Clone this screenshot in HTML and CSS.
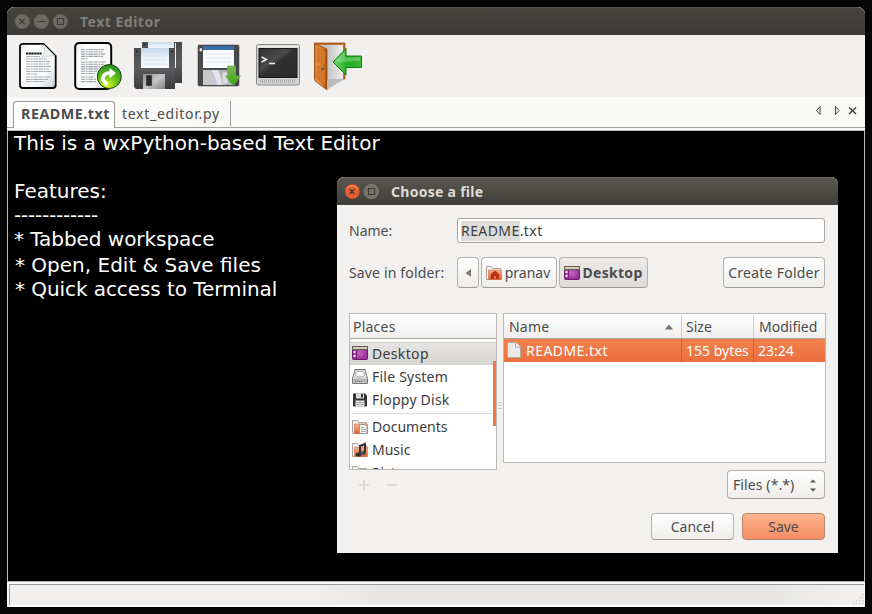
FILE: index.html
```html
<!DOCTYPE html>
<html lang="en">
<head>
<meta charset="utf-8">
<title>Text Editor</title>
<link rel="stylesheet" href="styles.css">
</head>
<body>
<svg width="0" height="0" class="defs" aria-hidden="true">
  <defs>
    <linearGradient id="paper" x1="0" y1="0" x2="1" y2="1"><stop offset="0" stop-color="#e2e7ea"/><stop offset=".2" stop-color="#fff"/><stop offset=".7" stop-color="#f7f8f9"/><stop offset="1" stop-color="#c5ccd0"/></linearGradient>
    <linearGradient id="steel" x1="0" y1="0" x2="0" y2="1"><stop offset="0" stop-color="#4a4a4c"/><stop offset=".5" stop-color="#5c5b5d"/><stop offset="1" stop-color="#3c3c3e"/></linearGradient>
    <linearGradient id="label" x1="0" y1="0" x2="0" y2="1"><stop offset="0" stop-color="#c5d8e9"/><stop offset=".5" stop-color="#e9f2fa"/><stop offset="1" stop-color="#fafcff"/></linearGradient>
    <linearGradient id="shutter" x1="0" y1="0" x2="1" y2="1"><stop offset="0" stop-color="#8f8f8f"/><stop offset=".5" stop-color="#c7c7c9"/><stop offset="1" stop-color="#808080"/></linearGradient>
    <radialGradient id="ball" cx=".4" cy=".9" r=".85"><stop offset="0" stop-color="#e9f52c"/><stop offset=".5" stop-color="#6dc51a"/><stop offset="1" stop-color="#299321"/></radialGradient>
    <linearGradient id="green" x1="0" y1="0" x2="0" y2="1"><stop offset="0" stop-color="#7fb35c"/><stop offset="1" stop-color="#35ab08"/></linearGradient>
    <linearGradient id="arrow" x1="0" y1="0" x2="1" y2="0"><stop offset="0" stop-color="#6fd866"/><stop offset=".5" stop-color="#22ad22"/><stop offset="1" stop-color="#38b833"/></linearGradient>
    <linearGradient id="screen" x1="0" y1="0" x2="1" y2="1"><stop offset="0" stop-color="#303030"/><stop offset=".4" stop-color="#4a4a4a"/><stop offset=".5" stop-color="#303030"/><stop offset="1" stop-color="#2c2c2c"/></linearGradient>
    <linearGradient id="wood" x1="0" y1="0" x2="1" y2="0"><stop offset="0" stop-color="#e7954b"/><stop offset=".7" stop-color="#d47526"/><stop offset="1" stop-color="#984409"/></linearGradient>
    <linearGradient id="room" x1="0" y1="0" x2="1" y2="0"><stop offset="0" stop-color="#aaa"/><stop offset="1" stop-color="#eee"/></linearGradient>
    <radialGradient id="purple"><stop offset="0" stop-color="#cb63bf"/><stop offset="1" stop-color="#96309a"/></radialGradient>
    <linearGradient id="orange" x1="0" y1="0" x2="0" y2="1"><stop offset="0" stop-color="#f8b894"/><stop offset="1" stop-color="#df5f2e"/></linearGradient>
    <symbol id="i-desktop" viewBox="0 0 16 16"><rect x=".5" y="1.500" width="15" height="13" rx="1" fill="url(#purple)" stroke="#72156b"/><path d="M0 1h16v4H0z" fill="#666252"/><path d="M1 2h14v2H1z" fill="#d0ceb6"/><path d="M1.500 6h2v2h-2zm0 4h2v2h-2z" fill="#eee"/><path d="M4.500 5v9" stroke="#7c2278"/></symbol>
    <symbol id="i-folder" viewBox="0 0 16 16"><path d="M.5 14.500v-13h5l1 2h8v11z" fill="#f6f5f3" stroke="#a7a5a1"/><path d="M2.500 5v9.500h13V5z" fill="url(#orange)" stroke="#d9633a" stroke-width=".6"/></symbol>
  </defs>
</svg>

<main class="window">
  <header class="titlebar">
    <svg class="winbtns" width="54" height="16" viewBox="0 0 54 16"><g fill="#6b6963" stroke="#64625c"><circle cx="8.300" cy="7.500" r="7.200"/><circle cx="27.300" cy="7.500" r="7.200"/><circle cx="46.300" cy="7.500" r="7.200"/></g><path d="M5.500 5l5 5m0-5l-5 5M23.500 7.500h8M43.500 4.500h6v6h-6z" fill="none" stroke="#3d3c37" stroke-width="1.100"/></svg>
    <h1>Text Editor</h1>
  </header>

  <nav class="toolbar">
    <svg viewBox="0 0 48 48"><path d="M9 1.800H29.500L41.700 14V43q0 3-3 3H9q-3 0-3-3V5q0-3.200 3-3.200z" fill="url(#paper)" stroke="#050505" stroke-width="1.800"/><path d="M29.500 2.500L41 14c-4-1-7 0-13 1.500 3-5 3-9 1.500-13z" fill="#e9eef1" stroke="#bcc4c8" stroke-width=".6"/><path d="M12 11.500h16" stroke="#222" stroke-width="2" stroke-dasharray="2.500 .4 2 .3"/><path d="M12 14.500h14M12 17h21M12 19.500h24M12 22h23M12 24.500h25M12 27h23M12 29.500h25M12 32h11M12 35h24M12 37.500h22M12 39.500h19" stroke="#a3a7aa" stroke-width="1.200" stroke-dasharray="4 .7 2 .6 5 .5"/></svg>
    <svg viewBox="0 0 48 48"><rect x="1.200" y="1" width="36" height="46" rx="4" fill="url(#paper)" stroke="#050505" stroke-width="2"/><path d="M7 7.500h23M7 9.800h22M7 12.100h24M7 14.400h22M7 16.700h7M7 20h24M7 22.300h23M7 24.600h20M7 26.900h17M7 29.200h16M7 31.500h14M7 35h13M7 37.300h15M7 39.600h15" stroke="#9ca1a4" stroke-width="1.100" stroke-dasharray="4 .7 2 .6 5 .5"/><circle cx="35.300" cy="34.500" r="12" fill="url(#ball)" stroke="#16480d"/><path d="M33.500 42C26.500 39 27.500 31 36.500 31" fill="none" stroke="#fff" stroke-width="3.600"/><path d="M35.500 26l6.500 5-6.500 5.500z" fill="#fff"/></svg>
    <svg viewBox="0 0 48 48"><path d="M8 0h40v41H8z" fill="url(#steel)"/><path d="M14 0h26v8H14z" fill="url(#label)"/><path d="M35 6h7v19h-2z" fill="#d5e1ec"/><path d="M9 1h3v3H9z" fill="#242424" stroke="#777" stroke-width=".5"/><path d="M41 1h1v25h-1z" fill="#eef3f8"/><path d="M0 6h41v41H2l-2-2z" fill="url(#steel)"/><path d="M7 6h28v20H7z" fill="url(#label)"/><path d="M9 10h24M9 14h24M9 18h24M9 22h24" stroke="#d5dfe9"/><path d="M1.500 8h2.500v3H1.500zM37 8h2.500v3H37z" fill="#222" stroke="#777" stroke-width=".5"/><path d="M9 32h22v15H9z" fill="url(#shutter)"/><path d="M12 33h6v11h-6z" fill="#292929" stroke="#999" stroke-width=".5"/></svg>
    <svg viewBox="0 0 48 48"><path d="M4 4q0-1 1-1h39q1 0 1 1v39l-1 1H5l-1-1z" fill="#48494c" stroke="#393939" stroke-width=".5"/><path d="M9 4h31v22H9z" fill="#f9fafc"/><path d="M9 4h31v4H9z" fill="#386ea9"/><path d="M12 12h25M12 16h25M12 20h25" stroke="#dde4ea"/><rect x="5.500" y="6" width="2.500" height="3.500" rx="1" fill="#ddd"/><path d="M9 28h31v15H9z" fill="#b5b6ba"/><path d="M9 28h8v15H9z" fill="#c9c9c9"/><path d="M17 28h7l8 15H17z" fill="#c6c7d4"/><path d="M18 28h6l5 15h-5z" fill="#e4e4ec"/><path d="M28 30h6v12h-6z" fill="#dcdcdd" stroke="#999" stroke-width=".5"/><path d="M33.500 24h8v10h5L39 43.500l-7.500-9.500h2z" fill="url(#green)" stroke="#72a953" stroke-width=".7"/></svg>
    <svg viewBox="0 0 48 48"><rect x="2.500" y="2.500" width="43" height="40.500" rx="2" fill="#d2d2d0" stroke="#8b8b89"/><path d="M3.500 3.500h41v2h-41z" fill="#eeeeed"/><rect x="5" y="6.500" width="38" height="29" fill="url(#screen)" stroke="#171717"/><path d="M7.500 15l5 2.500-5 2.500M15 21.500h6" fill="none" stroke="#eee" stroke-width="1.500"/><path d="M6 39h36" stroke="#aaa" stroke-width="3.500" stroke-dasharray="1 1"/></svg>
    <svg viewBox="0 0 48 48"><path d="M0 1h31v36H0z" fill="#c67029" stroke="#87400c" stroke-width=".7"/><path d="M3 3h26v34H3z" fill="url(#room)"/><path d="M14 37h15v1L14 47z" fill="#bbb"/><path d="M1 2l12 5v41L1 39z" fill="url(#wood)" stroke="#9f4f12" stroke-width=".8"/><path d="M3.500 6l2.500 1v14l-2.500-1zM8 8l3 1v14l-3-1zM3.500 24l2.500 1v13l-2.500-1zM8 26l3 1v16l-3-2z" fill="#d77b2d" stroke="#b9621c" stroke-width=".5"/><circle cx="8.500" cy="27" r="1.300" fill="#555"/><path d="M19 20L32 6.500v7.500h15.500v11.500H32V33z" fill="url(#arrow)" stroke="#0d800d"/><path d="M21 20L31 9v6.500h15V19c-9-1-15 2-25 1z" fill="#fff" opacity=".25"/></svg>
  </nav>

  <nav class="tabs">
    <span class="tab active">README.txt</span>
    <span class="tab">text_editor.py</span>
    <svg class="tabnav" width="44" height="14" viewBox="0 0 44 14"><path d="M7 2.500v8L3.500 6.500zM22.500 2.500v8L26 6.500z" fill="none" stroke="#44433f"/><path d="M36 3.500l7 6.500m0-6.500l-7 6.500" stroke="#44433f" stroke-width="1.500"/></svg>
  </nav>

  <section class="editor">
    <p>This is a wxPython-based Text Editor</p>
    <p>&nbsp;</p>
    <p>Features:</p>
    <p class="dashes">------------</p>
    <p class="bullet first">* Tabbed workspace</p>
    <p class="bullet">* Open, Edit &amp; Save files</p>
    <p class="bullet last">* Quick access to Terminal</p>
  </section>
  <footer class="statusbar"><div class="well"><svg width="12" height="12" viewBox="0 0 12 12"><path d="M10 1.500h2M7 4.500h5M4 7.500h8M1 10.500h11" stroke="#d2d0cc" stroke-width="1.300" stroke-dasharray="1.500 1.500"/></svg></div></footer>
</main>

<section class="dialog">
  <header class="titlebar">
    <svg class="winbtns" width="35" height="16" viewBox="0 0 35 16"><circle cx="8.300" cy="7.500" r="7.300" fill="#e95f35" stroke="#b9431e" stroke-width=".6"/><path d="M2.500 5a6.500 6.500 0 0 1 11.500 0" fill="none" stroke="#f69978"/><circle cx="27.300" cy="7.500" r="7.300" fill="#75736c" stroke="#8a8880" stroke-width=".6"/><path d="M5.500 5l5 5m0-5l-5 5M24.500 4.500h6v6h-6z" fill="none" stroke="#393731" stroke-width="1.100"/></svg>
    <h2>Choose a file</h2>
  </header>
  <div class="content">
    <div class="row name-row"><span class="caption">Name:</span><div class="input"><span class="selected">README</span>.txt</div></div>
    <div class="row path-row"><span class="caption folder">Save in folder:</span>
      <span class="button back"><svg width="8" height="10"><path d="M7 1v8L1.500 5z" fill="#7a7874"/></svg></span>
      <span class="button home"><svg class="ico" viewBox="0 0 16 16"><use href="#i-folder"/><path d="M4 10l5-4.500 5 4.500h-1v4h-3v-3H8v3H5v-4z" fill="#bb3412"/></svg><span>pranav</span></span>
      <span class="button current"><svg class="ico"><use href="#i-desktop"/></svg><b>Desktop</b></span>
      <span class="button create">Create Folder</span>
    </div>
    <div class="panes">
      <div class="left">
        <div class="places">
          <div class="head">Places</div>
          <div class="place on"><svg class="ico"><use href="#i-desktop"/></svg><span class="t-desk">Desktop</span></div>
          <div class="place"><svg class="ico" viewBox="0 0 16 16"><path d="M3 .5h10l2.500 9v5H.5v-5z" fill="#ddd" stroke="#777"/><ellipse cx="8" cy="5" rx="4.500" ry="3" fill="#f4f4f4" stroke="#aaa"/><path d="M1 9.500h14v4H1z" fill="#b5b5b5"/><path d="M3 12.500h7" stroke="#666" stroke-dasharray="1 1"/></svg><span class="t-fs">File System</span></div>
          <div class="place"><svg class="ico" viewBox="0 0 16 16"><path d="M1 1.500h12l2 2v11H1z" fill="#333"/><path d="M4 1.500h8v5H4z" fill="#ddd"/><path d="M9 2h2v3.500H9z" fill="#333"/><path d="M3.500 8.500h9v6h-9z" fill="#eee"/><path d="M4 10.500h8m-8 2h8" stroke="#999"/></svg><span class="t-floppy">Floppy Disk</span></div>
          <div class="rule"></div>
          <div class="place"><svg class="ico" viewBox="0 0 16 16"><use href="#i-folder"/><path d="M7.500 5.500h5l2.500 2v7H7.500z" fill="#f3f3f1" stroke="#999"/><path d="M9 8.500h3m-3 2h5m-5 2h5" stroke="#aaa"/></svg><span>Documents</span></div>
          <div class="place"><svg class="ico" viewBox="0 0 16 16"><use href="#i-folder"/><path d="M8 12V4l5-2v8" fill="none" stroke="#333" stroke-width="2"/><ellipse cx="6.500" cy="12.500" rx="2.800" ry="2" fill="#333"/><ellipse cx="11.500" cy="11" rx="2.500" ry="2" fill="#444"/></svg><span>Music</span></div>
          <div class="place"><svg class="ico"><use href="#i-folder"/></svg><span>Pictures</span></div>
          <i class="scroll"></i>
        </div>
        <svg class="addremove" width="60" height="14" viewBox="0 0 60 14"><path d="M10 7h10M15 2v10M38 7h10" stroke="#dddbd8" stroke-width="2"/></svg>
      </div>
      <div class="grip"><i></i><i></i><i></i></div>
      <div class="files">
        <div class="cols header"><span>Name<svg width="8" height="6"><path d="M0 5.500L4 .5l4 5z" fill="#73716d"/></svg></span><span>Size</span><span>Modified</span></div>
        <div class="cols item"><span><svg class="file" viewBox="0 0 14 16"><path d="M.5.500h8.500l4.500 4.500v10.500H.5z" fill="#e9e9e7" stroke="#aaa9a5"/><path d="M8.500.500V5h5" fill="#fff" stroke="#aaa9a5"/></svg><span class="t-file">README.txt</span></span><span>155 bytes</span><span>23:24</span></div>
      </div>
    </div>
    <div class="filter"><span class="button combo"><span>Files (*.*)</span><svg width="8" height="14"><path d="M1 4.500L4 1.500l3 3zM1 10.500L4 13.500l3-3z" fill="#595753"/></svg></span></div>
    <div class="actions"><span class="button">Cancel</span><span class="button save">Save</span></div>
  </div>
</section>
</body>
</html>
```
FILE: styles.css
```css
* { box-sizing: border-box; }
body { margin: 0; width: 872px; height: 614px; padding: 7px; background: #050505; overflow: hidden; position: relative; color: #4c4c4c; font: 14px/20px "Noto Sans", sans-serif; white-space: nowrap; }
svg { flex: none; display: block; }
.defs { position: absolute; }
h1, h2, p { margin: 0; }
.window { width: 858px; height: 600px; display: flex; flex-direction: column; background: #f2f1f0; border-radius: 7px 7px 0 0; overflow: hidden; }
.titlebar { height: 28px; flex: none; display: flex; align-items: center; padding-left: 7px; background: linear-gradient(#45443f, #3c3b37); border-top: 1px solid #55534d; border-radius: 7px 7px 0 0; }
.titlebar h1, .titlebar h2 { font-size: 14px; line-height: 20px; font-weight: 700; }
.window h1 { color: #807d78; margin-left: 12px; letter-spacing: .5px; }
.toolbar { height: 62px; flex: none; display: flex; gap: 12px; padding: 7px; background: #f1f0ee; }
.toolbar svg { width: 48px; height: 48px; }
.tabs { height: 33px; flex: none; display: flex; align-items: flex-start; background: #f9f9f7; padding: 4px 6px 0; box-shadow: inset 0 -2px #fcfcfb, inset 0 -3px #a5a59d; }
.tab { height: 25px; padding: 3px 10px 0 7px; border-right: 1px solid #999; letter-spacing: .72px; }
.tab.active { height: 27px; background: #fff; border: 1px solid #999; border-bottom: 0; border-radius: 3px 3px 0 0; font-weight: 700; font-size: 14.300px; letter-spacing: .5px; width: 102px; padding: 2px 0 0 7px; }
.tabnav { margin: 3px 2px 0 auto; }
.editor { flex: none; height: 452px; background: #000; border: 1px solid #bcbcb7; border-bottom: 1px solid #aaa9a4; color: #fff; font: 20px/24px "DejaVu Sans", sans-serif; padding-left: 6px; }
.dashes { letter-spacing: -.22px; }
.bullet { padding-left: 1px; }
.bullet.first { height: 26px; padding-left: 0; letter-spacing: -.05px; }
.bullet.last { letter-spacing: -.07px; }
.statusbar { flex: 1; padding: 2px 1px 1px 2px; background: #fafafa; }
.well { height: 22px; border-top: 1px solid #999; border-left: 1px solid #999; border-bottom: 1px solid #fff; background: linear-gradient(90deg, transparent 300px, rgba(0,0,0,.04) 370px 760px, transparent 840px), #f1f0ee; display: flex; justify-content: flex-end; align-items: flex-end; }
.dialog { position: absolute; left: 337px; top: 177px; width: 501px; height: 376px; background: #f2f1f0; border-radius: 7px 7px 0 0; }
.dialog .titlebar { background: linear-gradient(#59574f, #3e3d39); border-color: #69675e; }
.dialog h2 { color: #dfdbd2; margin-left: 12px; letter-spacing: .28px; }
.content { padding: 13px 13px 0 12px; }
.row { display: flex; align-items: center; }
.caption { width: 108px; flex: none; }
.folder { letter-spacing: .15px; }
.input { width: 368px; height: 25px; border: 1px solid #aaa49e; border-radius: 3px; background: #fff; padding: 2px 3px; line-height: 20px; color: #3c3c3c; letter-spacing: .42px; }
.selected { background: #dfdddb; display: inline-block; height: 20px; vertical-align: top; }
.path-row { margin-top: 14px; height: 31px; }
.button { height: 31px; flex: none; border: 1px solid #b6b2ad; border-bottom-color: #9d9993; border-radius: 4px; background: linear-gradient(#fff, #eeedeb); display: flex; align-items: center; justify-content: center; }
.back { width: 22px; }
.home { width: 76px; margin-left: 2px; gap: 3px; }
.current { width: 89px; margin-left: 2px; gap: 2px; background: linear-gradient(#ecebea, #dedcda); letter-spacing: .3px; padding-top: 1px; }
.create { width: 102px; margin-left: auto; letter-spacing: .25px; }
.ico { width: 16px; height: 16px; }
.home .ico { margin-left: -2px; }
.panes { display: flex; margin-top: 25px; }
.left { width: 148px; height: 157px; flex: none; }
.places { position: relative; width: 148px; height: 157px; border: 1px solid #bcb9b5; background: #fff; overflow: hidden; color: #3c3c3c; }
.head { height: 25px; padding: 3px 3px 1px; background: linear-gradient(#fff, #f0efee); border-bottom: 1px solid #aaa7a3; margin-bottom: 3px; color: #4c4c4c; letter-spacing: .22px; }
.place { height: 23px; display: flex; align-items: center; gap: 4px; padding-left: 2px; }
.place.on { background: linear-gradient(#e6e4e2, #d8d6d3); border-top: 1px solid #d0cecb; }
.place.on .ico { margin-top: -2px; }
.t-desk { letter-spacing: .35px; }
.t-fs, .t-floppy { letter-spacing: .22px; }
.rule { height: 3px; border-top: 1px solid #dddbd9; margin: 2px 2px 0; height: 2px; }
.scroll { position: absolute; right: 0; top: 47px; width: 3px; height: 65px; background: #f07746; }
.addremove { margin-top: 8px; }
.grip { width: 6px; flex: none; display: flex; flex-direction: column; gap: 2px; padding: 89px 1px 0; height: 150px; }
.grip i { height: 1px; background: #ccc; }
.files { width: 323px; height: 150px; flex: none; border: 1px solid #bcb9b5; background: #fff; }
.cols { display: grid; grid-template-columns: 177px 72px 72px; height: 24px; }
.cols > span { display: flex; align-items: center; padding-left: 4px; border-left: 1px solid #d0cecb; }
.cols > span:first-child { border: 0; }
.header { background: linear-gradient(#fff, #efeeed); border-bottom: 1px solid #aaa7a3; height: 25px; padding-top: 1px; }
.header > span:last-child { padding-left: 5px; }
.header > span:first-child { padding: 0 8px 0 5px; justify-content: space-between; letter-spacing: .2px; }
.item { background: linear-gradient(#f2814f, #eb6f3c); color: #fff; height: 23px; }
.item > span { border-color: #c96239; }
.item > span:first-child { padding-left: 3px; }
.t-file { letter-spacing: .45px; }
.file { width: 14px; height: 16px; margin-right: 5px; margin-top: -2px; }
.filter { display: flex; justify-content: flex-end; }
.combo { width: 98px; height: 29px; justify-content: space-between; padding: 0 7px 0 5px; letter-spacing: .1px; }
.actions { display: flex; justify-content: flex-end; gap: 8px; margin-top: 14px; }
.actions .button { width: 83px; height: 27px; }
.actions .save { background: linear-gradient(#ffb391, #f58d62); border-color: #b7846e; }
```
